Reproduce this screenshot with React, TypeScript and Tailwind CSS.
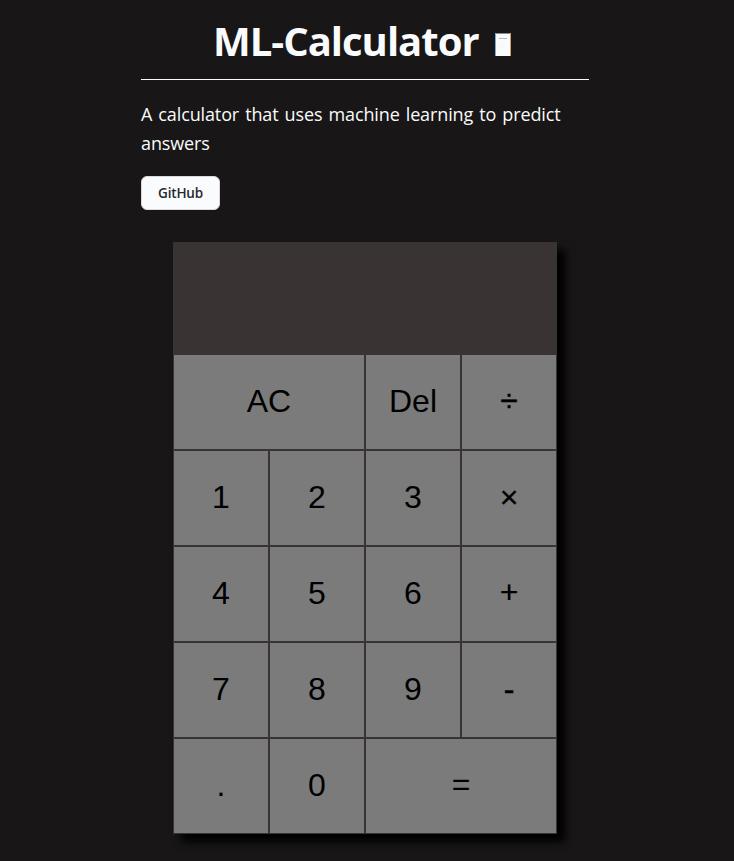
const keys: { label: string; wide?: boolean; face?: string }[] = [
  { label: 'AC', wide: true },
  { label: 'Del' },
  { label: '÷', face: 'pb-[3px] [-webkit-text-stroke:0.3px_black]' },
  { label: '1' },
  { label: '2' },
  { label: '3' },
  { label: '×', face: 'pb-px [-webkit-text-stroke:0.3px_black]' },
  { label: '4' },
  { label: '5' },
  { label: '6' },
  { label: '+', face: 'pb-[3px] [-webkit-text-stroke:0.2px_black]' },
  { label: '7' },
  { label: '8' },
  { label: '9' },
  { label: '-', face: 'pb-px [-webkit-text-stroke:0.5px_black]' },
  { label: '.' },
  { label: '0' },
  { label: '=', wide: true, face: 'pb-[3px]' },
];

function CalculatorIcon() {
  return (
    <svg className="mt-2 h-6 w-4" viewBox="0 0 16 24" shapeRendering="crispEdges" aria-hidden="true">
      <rect width="16" height="23" fill="#fafbfc" />
      <rect width="16" height="1" fill="#8c8b8c" />
      <rect width="1" height="23" fill="#6faee0" />
      <rect x="15" width="1" height="23" fill="#d99a5b" />
      <rect x="4" y="5" width="8" height="1" fill="#bab8bc" />
      {[10, 12, 14].map((y) =>
        [5, 7, 9].map((x) => <rect key={`${x}-${y}`} x={x} y={y} width="1" height="1" fill="#f3f4f6" />),
      )}
    </svg>
  );
}

export default function App() {
  return (
    <main className="h-[861px] overflow-hidden bg-[#181616] font-['Open_Sans',sans-serif] text-[#fafbfc]">
      <div className="ml-[141px] w-[448px]">
        <h1 className="flex h-20 items-center gap-4 border-b border-[#fafbfc] pt-0.5 pl-[72px] text-[40px] leading-[60px] font-bold tracking-[-1px] whitespace-nowrap">
          <span className="w-[266px]">ML-Calculator</span>
          <CalculatorIcon />
        </h1>
        <p className="mt-5 text-[18px] leading-[28.8px] tracking-[-0.12px] [word-spacing:1.5px]">
          A calculator that uses machine learning to predict
          <br />
          answers
        </p>
        <button className="mt-[18px] block h-[34px] w-[79px] rounded-md border border-[#d9dadb] bg-[#fafbfc] pt-0.5 text-[13.5px] font-semibold tracking-[-0.2px] text-[#24292e]">
          GitHub
        </button>
        <section className="mx-auto mt-8 w-96 bg-[#3a3333] shadow-[8px_8px_8px_#000]">
          <div className="h-28" />
          <div className="grid auto-rows-[96px] grid-cols-4 font-['Liberation_Sans',sans-serif] text-[32px] text-black">
            {keys.map(({ label, wide, face = 'pb-px' }) => (
              <button
                key={label}
                className={`border border-[#3a3333] bg-[#7b7b7b] ${wide ? 'col-span-2' : ''} ${face}`}
              >
                {label}
              </button>
            ))}
          </div>
        </section>
      </div>
    </main>
  );
}
